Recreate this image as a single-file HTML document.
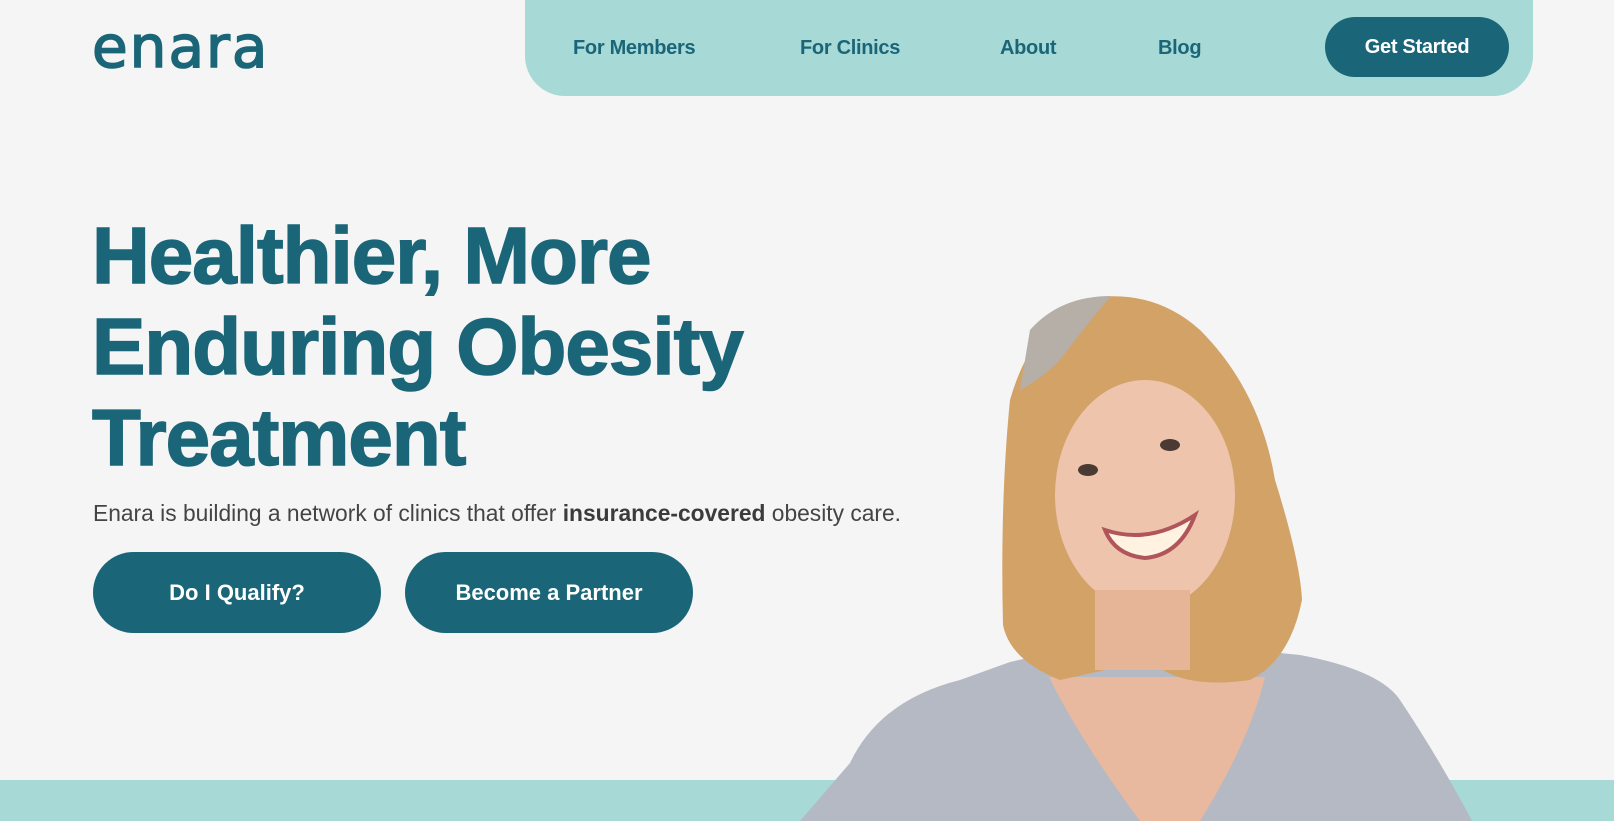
<!DOCTYPE html>
<html><head><meta charset="utf-8">
<style>
*{margin:0;padding:0;box-sizing:border-box}
html,body{width:1614px;height:821px;overflow:hidden;background:#f5f5f5;font-family:"Liberation Sans",sans-serif}
.logo{position:absolute;left:92px;top:18px;font-size:58px;font-weight:400;color:#1a6678;letter-spacing:2px;line-height:1;font-family:"DejaVu Sans","Liberation Sans",sans-serif;-webkit-text-stroke:1.6px #1a6678}
.nav{position:absolute;left:525px;top:0;width:1008px;height:96px;background:#a7d9d6;border-radius:0 0 40px 40px}
.nav a{position:absolute;top:37px;font-size:20px;font-weight:700;color:#1a6678;text-decoration:none;letter-spacing:-0.3px}
.gs{position:absolute;left:800px;top:17px;width:184px;height:60px;border-radius:30px;background:#1a6678;color:#fff;font-weight:700;font-size:20px;display:flex;align-items:center;justify-content:center;letter-spacing:-0.3px}
h1{position:absolute;left:92px;top:210px;font-size:80px;line-height:91px;font-weight:700;color:#1a6678;letter-spacing:-1px;-webkit-text-stroke:1.5px #1a6678}
p{position:absolute;left:93px;top:500px;font-size:22.8px;color:#444;letter-spacing:0}
p b{color:#3b3b3b}
.btn{position:absolute;top:552px;width:288px;height:81px;border-radius:41px;background:#1a6678;color:#fff;font-size:22px;font-weight:700;display:flex;align-items:center;justify-content:center}
.band{position:absolute;left:0;top:780px;width:1614px;height:41px;background:#a7d9d6}
svg{position:absolute;left:0;top:0}
</style></head><body>
<div class="logo">enara</div>
<div class="nav">
<a style="left:48px">For Members</a>
<a style="left:275px">For Clinics</a>
<a style="left:475px">About</a>
<a style="left:633px">Blog</a>
<div class="gs">Get Started</div>
</div>
<h1>Healthier, More<br>Enduring Obesity<br>Treatment</h1>
<p>Enara is building a network of clinics that offer <b>insurance-covered</b> obesity care.</p>
<div class="btn" style="left:93px">Do I Qualify?</div>
<div class="btn" style="left:405px">Become a Partner</div>
<div class="band"></div>
<svg width="1614" height="821">
<path d="M850 763 Q880 700 960 680 L1010 662 Q1100 640 1200 645 L1300 655 Q1380 670 1400 700 Q1440 760 1472 821 L800 821 Z" fill="#b4b9c4"/>
<path d="M1049 677 Q1080 740 1140 821 L1200 821 Q1250 740 1265 677 Z" fill="#e8b99e"/>
<path d="M1080 300 Q1150 285 1200 330 Q1260 390 1275 480 Q1300 560 1302 600 Q1290 660 1250 680 Q1180 690 1150 660 L1060 680 Q1010 660 1003 625 Q1000 500 1010 400 Q1030 330 1080 300 Z" fill="#d2a266"/>
<path d="M1030 330 Q1060 296 1111 296 Q1090 320 1060 360 Q1040 380 1020 390 Z" fill="#b5afa8"/>
<ellipse cx="1145" cy="495" rx="90" ry="115" fill="#eec4ad"/>
<rect x="1095" y="590" width="95" height="80" fill="#e6b597"/>
<ellipse cx="1088" cy="470" rx="10" ry="6" fill="#4a3a33"/>
<ellipse cx="1170" cy="445" rx="10" ry="6" fill="#4a3a33"/>
<path d="M1105 530 Q1150 545 1195 515 Q1180 555 1145 558 Q1115 555 1105 530 Z" fill="#fff2e0" stroke="#b0555a" stroke-width="4"/>
</svg>
</body></html>
